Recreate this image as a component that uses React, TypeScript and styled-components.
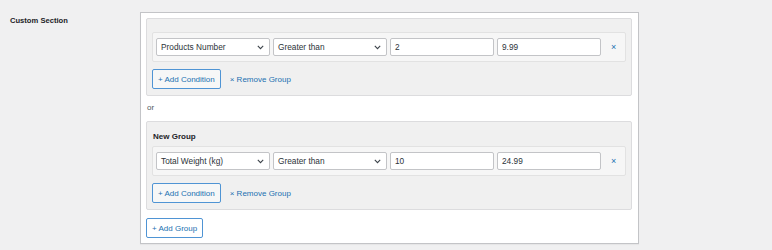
import styled, { createGlobalStyle } from "styled-components";

const GlobalStyle = createGlobalStyle`
  html, body {
    margin: 0;
    padding: 0;
    background: #f0f0f1;
    font-family: "Liberation Sans", Arial, sans-serif;
    color: #3c434a;
  }
`;

const Page = styled.div`
  display: flex;
  align-items: flex-start;
  padding-top: 12px;
  width: 772px;
  height: 250px;
  box-sizing: border-box;
`;

const Label = styled.div`
  width: 130px;
  padding: 4px 0 0 10px;
  font-size: 7.6px;
  font-weight: 700;
  color: #1d2327;
`;

const Panel = styled.div`
  width: 499px;
  box-sizing: border-box;
  background: #fff;
  border: 1px solid #c3c4c7;
  box-shadow: 0 1px 1px rgba(0, 0, 0, 0.04);
  padding: 5px 6px 5px 5px;
  display: flex;
  flex-direction: column;
  align-items: flex-start;
`;

const GroupWrap = styled.div`
  align-self: stretch;
`;

const Group = styled.div`
  background: #f0f0f0;
  border: 1px solid #dcdcde;
  border-radius: 2px;
  padding: 13px 5px 6px;
  display: flex;
  flex-direction: column;
  align-items: flex-start;
`;

const GroupTitle = styled.div`
  font-size: 8px;
  font-weight: 700;
  color: #1d2327;
  margin: -3px 0 4px 1px;
  line-height: 10px;
`;

const Row = styled.div`
  align-self: stretch;
  display: flex;
  align-items: center;
  gap: 3px;
  background: #f6f6f6;
  border: 1px solid #e2e2e2;
  border-radius: 2px;
  padding: 5px 3px;
`;

const SelectBox = styled.div`
  width: 114px;
  height: 18px;
  box-sizing: border-box;
  background: #fff;
  border: 1px solid #c3c4c7;
  border-radius: 2px;
  display: flex;
  align-items: center;
  justify-content: space-between;
  padding: 0 5px 0 4px;
  font-size: 8.3px;
  color: #2c3338;
`;

const InputBox = styled.div`
  width: 104px;
  height: 18px;
  box-sizing: border-box;
  background: #fff;
  border: 1px solid #c3c4c7;
  border-radius: 2px;
  display: flex;
  align-items: center;
  padding: 0 4px;
  font-size: 8.3px;
  color: #2c3338;
`;

const RemoveX = styled.span`
  margin-left: 7px;
  font-size: 9px;
  color: #2271b1;
  line-height: 1;
`;

const Actions = styled.div`
  display: flex;
  align-items: center;
  gap: 9px;
  margin-top: 7px;
`;

const Button = styled.button`
  height: 20px;
  box-sizing: border-box;
  padding: 0 5px;
  background: #f6f7f7;
  border: 1px solid #4f94d4;
  border-radius: 2px;
  color: #2271b1;
  font-family: inherit;
  font-size: 8px;
  cursor: pointer;
`;

const LinkText = styled.span`
  font-size: 8px;
  color: #2271b1;
`;

const OrText = styled.div`
  font-size: 8px;
  color: #50575e;
  margin: 7px 0 8px 1px;
  line-height: 10px;
`;

const AddGroup = styled(Button)`
  margin-top: 8px;
  background: #fff;
`;

const Chevron = () => (
  <svg width="7" height="5" viewBox="0 0 7 5">
    <path d="M0.8 0.9 L3.5 3.6 L6.2 0.9" fill="none" stroke="#3c434a" strokeWidth="1.1" />
  </svg>
);

type Condition = { field: string; op: string; min: string; max: string };

const groups: { title?: string; conditions: Condition[] }[] = [
  { conditions: [{ field: "Products Number", op: "Greater than", min: "2", max: "9.99" }] },
  {
    title: "New Group",
    conditions: [{ field: "Total Weight (kg)", op: "Greater than", min: "10", max: "24.99" }],
  },
];

export default function App() {
  return (
    <>
      <GlobalStyle />
      <Page>
        <Label>Custom Section</Label>
        <Panel>
          {groups.map((g, i) => (
            <GroupWrap key={i}>
              {i > 0 && <OrText>or</OrText>}
              <Group>
                {g.title && <GroupTitle>{g.title}</GroupTitle>}
                {g.conditions.map((c, j) => (
                  <Row key={j}>
                    <SelectBox>
                      {c.field}
                      <Chevron />
                    </SelectBox>
                    <SelectBox>
                      {c.op}
                      <Chevron />
                    </SelectBox>
                    <InputBox>{c.min}</InputBox>
                    <InputBox>{c.max}</InputBox>
                    <RemoveX>×</RemoveX>
                  </Row>
                ))}
                <Actions>
                  <Button>+ Add Condition</Button>
                  <LinkText>× Remove Group</LinkText>
                </Actions>
              </Group>
            </GroupWrap>
          ))}
          <AddGroup>+ Add Group</AddGroup>
        </Panel>
      </Page>
    </>
  );
}
